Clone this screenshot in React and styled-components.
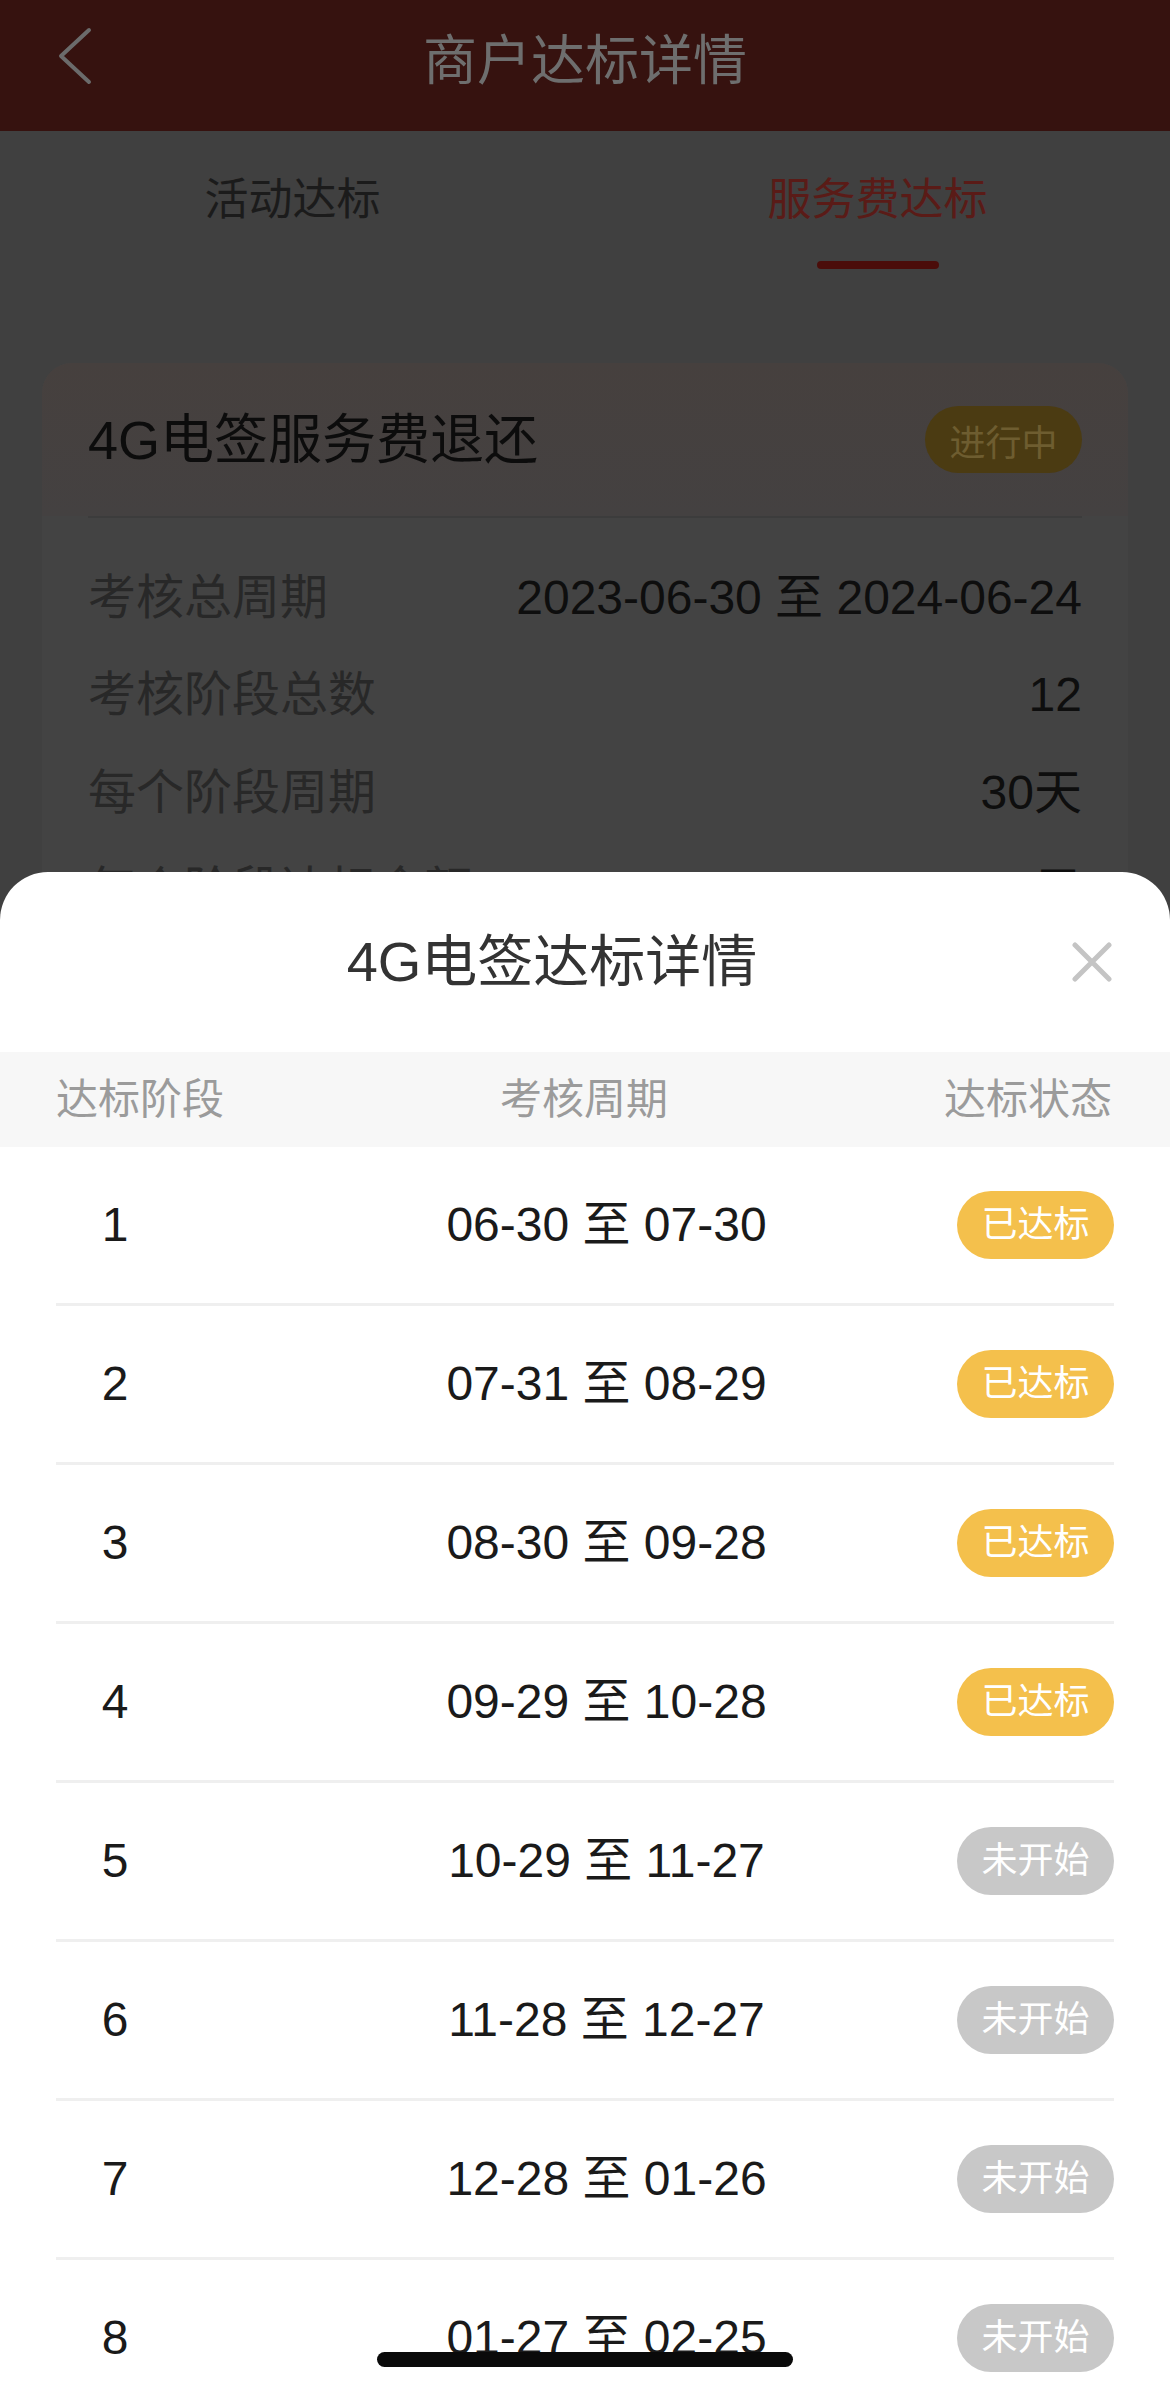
import React from 'react';
import styled, { createGlobalStyle } from 'styled-components';

const GlobalStyle = createGlobalStyle`
  html, body {
    margin: 0;
    padding: 0;
  }
  body {
    font-family: "Liberation Sans", "Noto Sans CJK SC", sans-serif;
    background: #404040;
  }
  * {
    box-sizing: border-box;
  }
`;

const Screen = styled.div`
  position: relative;
  width: 1170px;
  height: 2391px;
  overflow: hidden;
  background: #404040;
`;

/* ---------- dimmed page underneath the sheet ---------- */

const NavBar = styled.header`
  height: 131px;
  background: #36120f;
  display: grid;
  grid-template-columns: 1fr auto 1fr;
  align-items: center;
  padding-bottom: 9px;
`;

const BackButton = styled.button`
  justify-self: start;
  margin-left: 56px;
  margin-bottom: 8px;
  width: 40px;
  height: 60px;
  padding: 0;
  border: none;
  background: transparent;
  display: flex;
  align-items: center;
  justify-content: center;
`;

const NavTitle = styled.h1`
  margin: 0;
  font-size: 54px;
  font-weight: 400;
  line-height: 1;
  color: #6e6e6e;
`;

const TabBar = styled.nav`
  display: flex;
  height: 139px;
`;

const Tab = styled.div`
  flex: 1;
  display: flex;
  flex-direction: column;
  align-items: center;
  padding-top: 39px;
`;

const TabLabel = styled.span`
  font-size: 44px;
  line-height: 60px;
  color: ${(p) => (p.$active ? '#5a1b17' : '#1b1b1b')};
`;

const TabIndicator = styled.span`
  width: 122px;
  height: 8px;
  margin-top: 31px;
  border-radius: 4px;
  background: ${(p) => (p.$active ? '#4b0d0a' : 'transparent')};
`;

const Card = styled.section`
  margin: 93px 42px 0;
  background: #434343;
  border-radius: 30px;
  overflow: hidden;
`;

const CardHeader = styled.div`
  height: 153px;
  display: flex;
  align-items: center;
  justify-content: space-between;
  padding: 0 46px;
  background: linear-gradient(180deg, #46403e 0%, #444141 100%);
`;

const CardTitle = styled.h2`
  margin: 0;
  font-size: 54px;
  font-weight: 400;
  line-height: 1;
  color: #0c0c0c;
`;

const ProgressTag = styled.span`
  width: 157px;
  height: 67px;
  border-radius: 34px;
  background: #4b3b12;
  color: #6e5d30;
  font-size: 36px;
  display: flex;
  align-items: center;
  justify-content: center;
`;

const CardBody = styled.div`
  margin: 0 46px;
  border-top: 2px solid #3c3c3c;
  padding-top: 31px;
`;

const InfoRow = styled.div`
  height: 97.5px;
  display: flex;
  align-items: center;
  justify-content: space-between;
  font-size: 48px;
  line-height: 1;
`;

const InfoLabel = styled.span`
  color: #282828;
`;

const InfoValue = styled.span`
  color: #0e0e0e;
`;

/* ---------- bottom sheet ---------- */

const Sheet = styled.div`
  position: absolute;
  left: 0;
  right: 0;
  bottom: 0;
  height: 1519px;
  background: #ffffff;
  border-radius: 48px 48px 0 0;
  overflow: hidden;
`;

const SheetHeader = styled.div`
  height: 180px;
  display: flex;
  align-items: center;
  padding: 0 58px 0 32px;
`;

const SheetTitle = styled.h3`
  flex: 1;
  margin: 0;
  text-align: center;
  font-size: 56px;
  font-weight: 400;
  line-height: 1;
  color: #333333;
`;

const CloseButton = styled.button`
  width: 40px;
  height: 40px;
  padding: 0;
  border: none;
  background: transparent;
  display: flex;
`;

const TableHead = styled.div`
  height: 95px;
  background: #f7f7f7;
  display: flex;
  align-items: center;
  justify-content: space-between;
  padding: 0 58px 0 56px;
  font-size: 42px;
  line-height: 1;
  color: #9b9b9b;
`;

const StageList = styled.div`
  padding: 0 56px;
`;

const StageRow = styled.div`
  height: 159px;
  display: grid;
  grid-template-columns: 118px 1fr 157px;
  align-items: center;
  border-bottom: 3px solid #efefef;
  font-size: 48px;
  line-height: 1;
  color: #1a1a1a;
`;

const StageNo = styled.span`
  text-align: center;
`;

const StagePeriod = styled.span`
  text-align: center;
  padding-left: 82px;
  white-space: nowrap;
`;

const StageTag = styled.span`
  height: 68px;
  border-radius: 34px;
  background: ${(p) => (p.$done ? '#f4c04c' : '#c8c8c8')};
  color: #ffffff;
  font-size: 36px;
  display: flex;
  align-items: center;
  justify-content: center;
`;

const HomeIndicator = styled.div`
  position: absolute;
  left: 50%;
  bottom: 24px;
  width: 416px;
  height: 15px;
  margin-left: -208px;
  border-radius: 8px;
  background: #0a0a0a;
`;

const info = [
  ['考核总周期', '2023-06-30 至 2024-06-24'],
  ['考核阶段总数', '12'],
  ['每个阶段周期', '30天'],
  ['每个阶段达标金额', '5000元'],
];

const stages = [
  ['1', '06-30 至 07-30', true],
  ['2', '07-31 至 08-29', true],
  ['3', '08-30 至 09-28', true],
  ['4', '09-29 至 10-28', true],
  ['5', '10-29 至 11-27', false],
  ['6', '11-28 至 12-27', false],
  ['7', '12-28 至 01-26', false],
  ['8', '01-27 至 02-25', false],
];

export default function App() {
  return (
    <Screen>
      <GlobalStyle />
      <NavBar>
        <BackButton aria-label="返回">
          <svg width="40" height="60" viewBox="0 0 40 60">
            <polyline
              points="33,3 5,29 33,55"
              fill="none"
              stroke="#6b6b6b"
              strokeWidth="4"
              strokeLinecap="round"
              strokeLinejoin="round"
            />
          </svg>
        </BackButton>
        <NavTitle>商户达标详情</NavTitle>
        <span />
      </NavBar>

      <TabBar>
        <Tab>
          <TabLabel>活动达标</TabLabel>
          <TabIndicator />
        </Tab>
        <Tab>
          <TabLabel $active>服务费达标</TabLabel>
          <TabIndicator $active />
        </Tab>
      </TabBar>

      <Card>
        <CardHeader>
          <CardTitle>4G电签服务费退还</CardTitle>
          <ProgressTag>进行中</ProgressTag>
        </CardHeader>
        <CardBody>
          {info.map(([label, value]) => (
            <InfoRow key={label}>
              <InfoLabel>{label}</InfoLabel>
              <InfoValue>{value}</InfoValue>
            </InfoRow>
          ))}
        </CardBody>
      </Card>

      <Sheet>
        <SheetHeader>
          <SheetTitle>4G电签达标详情</SheetTitle>
          <CloseButton aria-label="关闭">
            <svg width="40" height="40" viewBox="0 0 40 40">
              <path
                d="M3 3 L37 37 M37 3 L3 37"
                stroke="#c4c4c4"
                strokeWidth="5"
                strokeLinecap="round"
              />
            </svg>
          </CloseButton>
        </SheetHeader>
        <TableHead>
          <span>达标阶段</span>
          <span>考核周期</span>
          <span>达标状态</span>
        </TableHead>
        <StageList>
          {stages.map(([no, period, done]) => (
            <StageRow key={no}>
              <StageNo>{no}</StageNo>
              <StagePeriod>{period}</StagePeriod>
              <StageTag $done={done}>{done ? '已达标' : '未开始'}</StageTag>
            </StageRow>
          ))}
        </StageList>
      </Sheet>
      <HomeIndicator />
    </Screen>
  );
}
